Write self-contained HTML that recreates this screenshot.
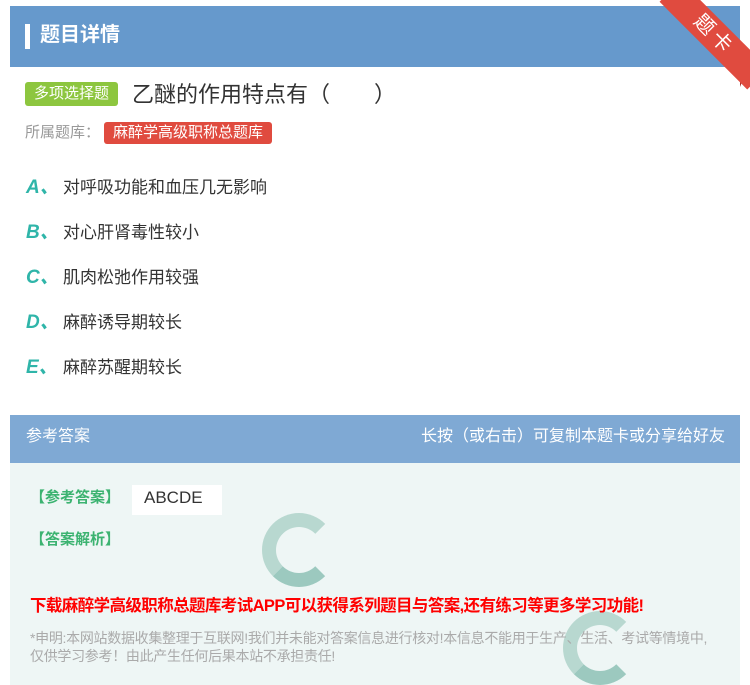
<!DOCTYPE html>
<html><head><meta charset="utf-8"><style>
*{margin:0;padding:0;box-sizing:border-box}
body{width:750px;height:685px;background:#fff;font-family:"Liberation Sans","Noto Sans CJK SC",sans-serif;position:relative;overflow:hidden}
.hd{position:absolute;left:10px;top:6px;width:730px;height:61px;background:#6699cc}
.hd .bar{position:absolute;left:15px;top:18px;width:5px;height:25px;background:#fff}
.hd .t{position:absolute;left:30px;top:15px;color:#fff;font-size:20px;font-weight:bold;line-height:28px}
.rib{position:absolute;left:652px;top:20px;width:124px;height:30px;background:#e04b3f;transform:rotate(45deg);color:#fff;font-size:20px;text-align:center;line-height:30px;letter-spacing:4px}
.fold{position:absolute;left:740px;top:67px;width:0;height:0;border-left:8px solid #a8322a;border-bottom:20px solid transparent}
.tag{position:absolute;left:25px;top:82px;height:24px;padding:0 9px;background:#8dc63f;color:#fff;font-size:15px;line-height:24px;border-radius:3px}
.q{position:absolute;left:132px;top:80px;font-size:22px;color:#333;line-height:30px}
.lib{position:absolute;left:25px;top:122px;font-size:15px;color:#999;line-height:22px}
.lib span{display:inline-block;background:#e04b3f;color:#fff;padding:0 9px;border-radius:3px;margin-left:4px}
.op{position:absolute;left:26px;font-size:17px;color:#333;line-height:24px}
.op b{color:#2fb5a9;font-style:italic;font-size:19px;display:inline-block;width:37px}
.ah{position:absolute;left:10px;top:415px;width:730px;height:48px;background:#7fa9d4;color:#fff;font-size:16px;line-height:44px}
.ab{position:absolute;left:10px;top:463px;width:730px;height:222px;background:#eef6f5;overflow:hidden}
.g{color:#3cb371;font-size:15px;font-weight:bold;position:absolute}
.circ{position:absolute;border-radius:50%;border:14px solid #b8d8d0;border-right-color:transparent;border-bottom-color:#9cc9bf}
</style></head><body>
<div class="hd"><div class="bar"></div><div class="t">题目详情</div></div>
<div class="fold"></div>
<div class="rib">题卡</div>
<div class="tag">多项选择题</div>
<div class="q">乙醚的作用特点有（　　）</div>
<div class="lib">所属题库：<span>麻醉学高级职称总题库</span></div>
<div class="op" style="top:176px"><b>A、</b>对呼吸功能和血压几无影响</div>
<div class="op" style="top:221px"><b>B、</b>对心肝肾毒性较小</div>
<div class="op" style="top:266px"><b>C、</b>肌肉松弛作用较强</div>
<div class="op" style="top:311px"><b>D、</b>麻醉诱导期较长</div>
<div class="op" style="top:356px"><b>E、</b>麻醉苏醒期较长</div>
<div class="ah"><span style="position:absolute;left:16px">参考答案</span><span style="position:absolute;right:15px">长按（或右击）可复制本题卡或分享给好友</span></div>
<div class="ab">
<div class="circ" style="left:252px;top:50px;width:74px;height:74px"></div>
<div class="circ" style="left:553px;top:148px;width:74px;height:74px"></div>
<div class="g" style="left:20px;top:23px">【参考答案】</div>
<div style="position:absolute;left:122px;top:22px;width:90px;height:30px;background:#fff;font-size:17px;color:#333;line-height:26px;padding-left:12px">ABCDE</div>
<div class="g" style="left:20px;top:65px">【答案解析】</div>
<div style="position:absolute;left:20px;top:129px;color:#f00;font-size:16.5px;font-weight:bold;letter-spacing:-0.6px;white-space:nowrap">下载麻醉学高级职称总题库考试APP可以获得系列题目与答案,还有练习等更多学习功能!</div>
<div style="position:absolute;left:20px;top:166px;width:680px;color:#aaa;font-size:14px;line-height:18px;letter-spacing:-0.3px">*申明:本网站数据收集整理于互联网!我们并未能对答案信息进行核对!本信息不能用于生产、生活、考试等情境中,仅供学习参考！由此产生任何后果本站不承担责任!</div>
</div>
</body></html>
